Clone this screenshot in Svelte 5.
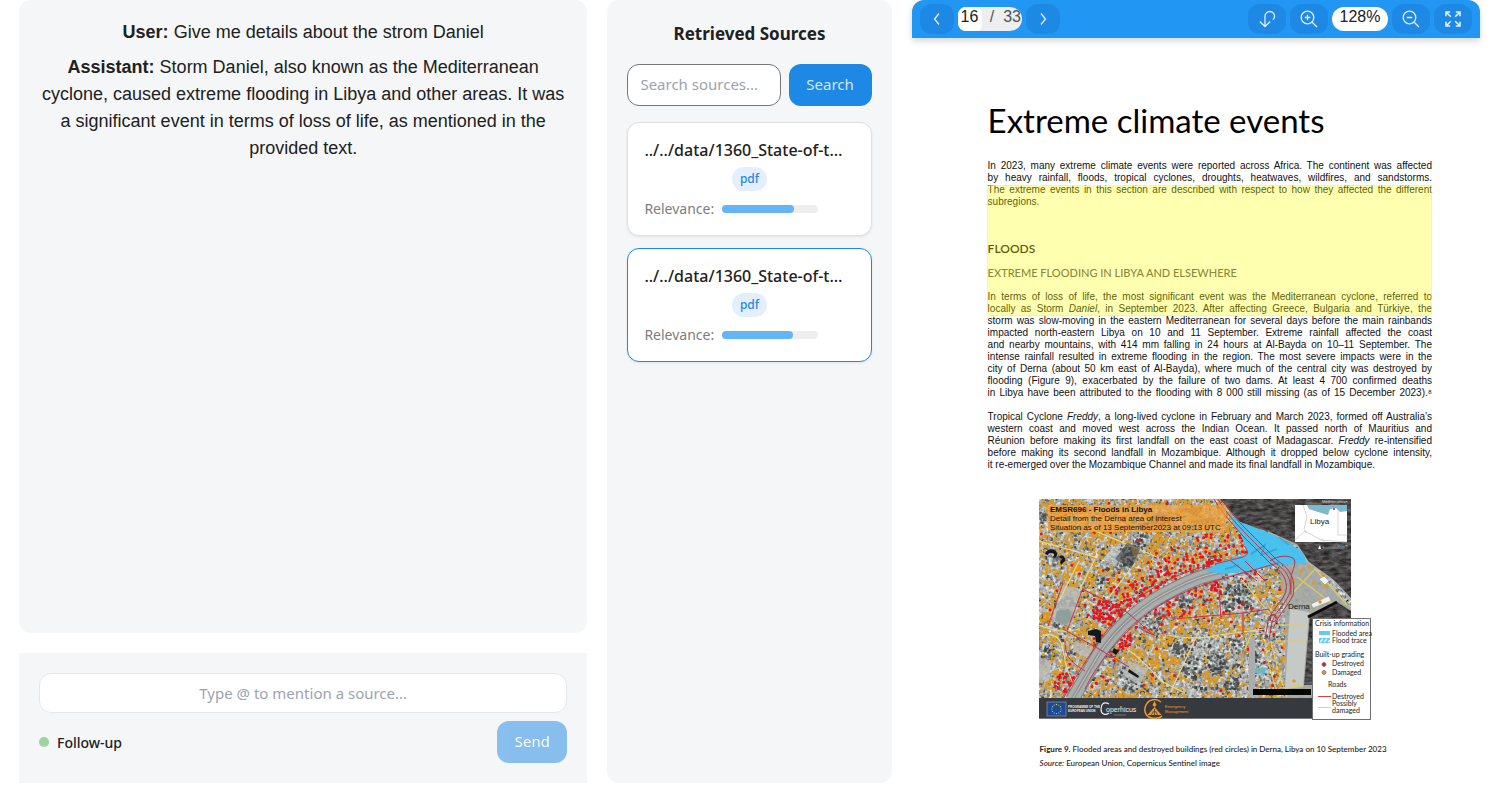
<script>
  const messages = [
    { role: 'User', text: 'Give me details about the strom Daniel' },
    {
      role: 'Assistant',
      text: 'Storm Daniel, also known as the Mediterranean cyclone, caused extreme flooding in Libya and other areas. It was a significant event in terms of loss of life, as mentioned in the provided text.'
    }
  ];

  const sources = [
    { id: 1, name: '../../data/1360_State-of-t…', type: 'pdf', score: 75 },
    { id: 2, name: '../../data/1360_State-of-t…', type: 'pdf', score: 74 }
  ];
  let selected = $state(2);
  let query = $state('');
  let draft = $state('');
  let page = $state('16');

  // Each entry is one typeset line; pieces in {} are italic.
  const intro = [
    'In 2023, many extreme climate events were reported across Africa. The continent was affected',
    'by heavy rainfall, floods, tropical cyclones, droughts, heatwaves, wildfires, and sandstorms.',
    'The extreme events in this section are described with respect to how they affected the different',
    'subregions.'
  ];
  const libya = [
    'In terms of loss of life, the most significant event was the Mediterranean cyclone, referred to',
    'locally as Storm {Daniel}, in September 2023. After affecting Greece, Bulgaria and Türkiye, the',
    'storm was slow-moving in the eastern Mediterranean for several days before the main rainbands',
    'impacted north-eastern Libya on 10 and 11 September. Extreme rainfall affected the coast',
    'and nearby mountains, with 414 mm falling in 24 hours at Al-Bayda on 10–11 September. The',
    'intense rainfall resulted in extreme flooding in the region. The most severe impacts were in the',
    'city of Derna (about 50 km east of Al-Bayda), where much of the central city was destroyed by',
    'flooding (Figure 9), exacerbated by the failure of two dams. At least 4 700 confirmed deaths',
    'in Libya have been attributed to the flooding with 8 000 still missing (as of 15 December 2023).⁸'
  ];
  const freddy = [
    'Tropical Cyclone {Freddy}, a long-lived cyclone in February and March 2023, formed off Australia’s',
    'western coast and moved west across the Indian Ocean. It passed north of Mauritius and',
    'Réunion before making its first landfall on the east coast of Madagascar. {Freddy} re-intensified',
    'before making its second landfall in Mozambique. Although it dropped below cyclone intensity,',
    'it re-emerged over the Mozambique Channel and made its final landfall in Mozambique.'
  ];
  const pieces = (line) => line.split(/[{}]/);

  // Seeded generator, so that the map is the same on every load.
  let seed = 9137;
  const rnd = () => {
    seed = (seed * 1664525 + 1013904223) % 4294967296;
    return seed / 4294967296;
  };
  const square = (x, y, s) => `M${x.toFixed(1)} ${y.toFixed(1)}h${s}v${s}h-${s}z`;
  const dot = (x, y, r) =>
    `M${(x - r).toFixed(1)} ${y.toFixed(1)}a${r} ${r} 0 1 0 ${2 * r} 0a${r} ${r} 0 1 0 ${-2 * r} 0z`;

  const road = [[33, 201], [60, 155], [76, 134], [96, 114], [135, 90], [171, 75], [205, 70]];
  const wadi = 'M33 201 60 155C78 128 105 104 135 90 150 82 165 76 182 73';
  function roadDistance(x, y) {
    let best = 999;
    for (let i = 0; i < road.length - 1; i++) {
      const [ax, ay] = road[i];
      const [bx, by] = road[i + 1];
      const dx = bx - ax;
      const dy = by - ay;
      const t = Math.max(0, Math.min(1, ((x - ax) * dx + (y - ay) * dy) / (dx * dx + dy * dy)));
      best = Math.min(best, Math.hypot(x - ax - t * dx, y - ay - t * dy));
    }
    return best;
  }
  const parks = [[4, 20, 7], [82, 58, 13], [100, 40, 8], [12, 57, 8], [26, 108, 12], [20, 122, 8], [198, 94, 14], [188, 106, 8], [146, 102, 8], [140, 150, 9], [152, 168, 12], [92, 182, 12], [62, 83, 7], [112, 122, 8], [196, 146, 10], [178, 164, 12], [192, 184, 9], [6, 155, 8], [212, 158, 6], [160, 190, 6]];
  const inPark = (x, y) => parks.some(([px, py, r]) => Math.hypot(x - px, y - py) < r);

  // Streets run on a grid turned by about thirty degrees.
  const onStreet = (x, y) => {
    const u = x * 0.86 + y * 0.5 + 400;
    const v = -x * 0.5 + y * 0.86 + 400;
    return u % 19 < 3 || v % 14 < 2.4;
  };

  const shades = ['#1c2021', '#363b3b', '#5d6260', '#8a8f8d', '#b0b5b2', '#d8dbd7'];
  const blocks = shades.map(() => '');
  for (let i = 0; i < 6200; i++) {
    const x = rnd() * 250;
    const y = rnd() * 199;
    const k = inPark(x, y)
      ? Math.floor(rnd() * 2.9)
      : onStreet(x, y)
        ? 3 + Math.floor(rnd() * 2.4)
        : Math.floor(rnd() * 6);
    blocks[k] += square(x, y, rnd() > 0.7 ? 3 : 2);
  }
  let damaged = '';
  let destroyed = '';
  for (let gx = 1; gx < 246; gx += 2.8) {
    for (let gy = 1; gy < 198; gy += 2.8) {
      const x = gx + rnd() * 2;
      const y = gy + rnd() * 2;
      if (inPark(x, y) && rnd() < 0.92) continue;
      const d = roadDistance(x, y);
      if (d < 8) continue;
      if (onStreet(x, y) && rnd() < 0.8) continue;
      const wave = Math.sin(x / 11 + y / 17) + Math.cos(y / 9 - x / 23);
      const sparse = x > 205 ? 0.3 : x > 150 && y > 130 ? 0.38 : 0.66;
      const core = Math.hypot(x - 68, y - 115) < 15 || Math.hypot(x - 28, y - 184) < 12 || Math.hypot(x - 86, y - 142) < 8;
      const strip = y < 118 && x < 214 && y > 34 ? 0.62 - d / 75 : 0.34 - d / 60;
      const redChance = core ? 0.85 : Math.max(strip, 0.02);
      if (rnd() < redChance && y < 194) destroyed += dot(x, y, 1.5);
      else if (rnd() < sparse + wave * 0.16) damaged += dot(x, y, 1.5);
    }
  }

  const stars = Array.from({ length: 12 }, (_, i) => {
    const a = (i * Math.PI) / 6;
    return { x: 17.5 + 4.6 * Math.cos(a), y: 210 + 4.6 * Math.sin(a) };
  });
</script>

{#snippet typeset(lines)}
  <p class="body-text">
    {#each lines as line, i}
      <span class="line" class:last={i === lines.length - 1 && line.length < 90}>{#each pieces(line) as piece, j}{#if j % 2}<em>{piece}</em>{:else}{piece}{/if}{/each}</span>
    {/each}
  </p>
{/snippet}

<div class="app">
  <main class="chat">
    <section class="panel messages" aria-label="Conversation">
      {#each messages as m}
        <p><strong>{m.role}:</strong> {m.text}</p>
      {/each}
    </section>
    <form class="composer" onsubmit={(e) => e.preventDefault()}>
      <input class="prompt" type="text" aria-label="Message" placeholder="Type @ to mention a source..." bind:value={draft} />
      <div class="composer-row">
        <span class="status"><i></i>Follow-up</span>
        <button class="primary send" type="submit" disabled={!draft}>Send</button>
      </div>
    </form>
  </main>

  <aside class="panel sources">
    <h2>Retrieved Sources</h2>
    <form class="search" onsubmit={(e) => e.preventDefault()}>
      <input type="text" aria-label="Search sources" placeholder="Search sources..." bind:value={query} />
      <button class="primary" type="submit">Search</button>
    </form>
    <div class="cards">
      {#each sources as s (s.id)}
        <button class="card" class:selected={selected === s.id} type="button" onclick={() => (selected = s.id)}>
          <span class="name">{s.name}</span>
          <span class="tag">{s.type}</span>
          <span class="relevance">
            Relevance:
            <span class="track"><span class="fill" style="width: {s.score}%"></span></span>
          </span>
        </button>
      {/each}
    </div>
  </aside>

  <section class="viewer" aria-label="Document">
    <div class="toolbar">
      <button type="button" class="nav" aria-label="Previous page">
        <svg width="16" height="16" viewBox="0 0 16 16"><path d="M10 2.500 5.500 8l4.500 5.500" /></svg>
      </button>
      <div class="pager">
        <input type="text" aria-label="Page number" bind:value={page} />
        <span>/</span><span class="total">33</span>
      </div>
      <button type="button" class="nav" aria-label="Next page">
        <svg width="16" height="16" viewBox="0 0 16 16"><path d="M6 2.500 10.500 8 6 13.500" /></svg>
      </button>
      <span class="spacer"></span>
      <button type="button" aria-label="Rotate page">
        <svg width="18" height="18" viewBox="0 0 18 18"><path d="M7 16.500V6.300a4.800 4.800 0 0 1 9.600 0c0 1.500-.6 2.600-1.700 3.500M1.800 11.500l5.200 5 5.200-5" /></svg>
      </button>
      <button type="button" aria-label="Zoom in">
        <svg width="18" height="18" viewBox="0 0 18 18"><circle cx="7.500" cy="7.500" r="6.300" /><path d="M12.200 12.200 17 17M4.700 7.500h5.600M7.500 4.700v5.600" /></svg>
      </button>
      <span class="zoom">128%</span>
      <button type="button" aria-label="Zoom out">
        <svg width="18" height="18" viewBox="0 0 18 18"><circle cx="7.500" cy="7.500" r="6.300" /><path d="M12.200 12.200 17 17M4.700 7.500h5.600" /></svg>
      </button>
      <button type="button" class="full" aria-label="Full screen">
        <svg width="18" height="18" viewBox="0 0 18 18"><path d="M2 6.200V2h4.200M2 2l4.800 4.800M11.800 2H16v4.200M16 2l-4.800 4.800M2 11.800V16h4.200M2 16l4.800-4.800M16 11.800V16h-4.200M16 16l-4.800-4.800" /></svg>
      </button>
    </div>

    <article class="page">
      <h1>Extreme climate events</h1>
      {@render typeset(intro)}
      <h3>FLOODS</h3>
      <h4>EXTREME FLOODING IN LIBYA AND ELSEWHERE</h4>
      {@render typeset(libya)}
      {@render typeset(freddy)}
      <div class="highlight"></div>

      <figure>
        <svg class="map" width="332" height="221" viewBox="0 0 332 221" role="img" aria-label="Map of flooded areas in Derna">
          <defs>
            <clipPath id="frame"><rect width="312" height="220" /></clipPath>
            <filter id="grain" x="0" y="0" width="100%" height="100%">
              <feTurbulence type="fractalNoise" baseFrequency="0.3" numOctaves="3" seed="4" />
              <feColorMatrix values="1.300 0 0 0 -.2  1.300 0 0 0 -.18  1.300 0 0 0 -.19  0 0 0 0 1" />
            </filter>
            <filter id="swell" x="0" y="0" width="100%" height="100%" color-interpolation-filters="sRGB">
              <feTurbulence type="fractalNoise" baseFrequency="0.12 0.3" numOctaves="3" seed="8" result="n" />
              <feColorMatrix values=".45 0 0 0 .06  .45 0 0 0 .05  .45 0 0 0 .05  0 0 0 0 1" />
              <feComposite in2="SourceGraphic" operator="in" />
            </filter>
          </defs>
          <g clip-path="url(#frame)">
            <rect width="312" height="199" fill="#888" filter="url(#grain)" />
            {#each shades as fill, i}<path d={blocks[i]} {fill} opacity=".7" />{/each}
            <path d={damaged} fill="#de981d" />
            <path d={destroyed} fill="#ee1016" />

            <g fill="#b9bebc" opacity=".8">
              <path d="M24 86 42 90 32 128 12 122z" />
              <path d="M36 142l18 6-4 12-16-8z" />
              <path d="M90 162l20 8-10 16-16-10z" />
              <path d="M0 158l12 4-2 20-10 2z" />
            </g>
            <path d="M18 112l12-2 4 10-8 6-10-4z" fill="#8fa09b" />
            <g fill="none" stroke="#e4da8a" stroke-width="1.200">
              <path d="M0 42 56 58M52 30 118 58M96 64 70 98M56 60 40 92M0 126c14 6 28 8 40 4M4 136c12-2 18 4 20 14 2 16 6 30 16 46M160 132l-28 60M88 150c12 8 22 18 34 32l24 12M128 136c20 4 36 4 52 0l46-6M20 28l34-8 30 6M40 62l-20 40" />
            </g>

            <path d="M240 68 258 64 270 64 312 108V199H246V110z" fill="#a5a8a2" opacity=".9" />
            <path d="M251 110 270 113 264 188 246 190z" fill="#c6cac7" />
            <path d="M210 138h6v60h-6z" fill="#a9adac" />
            <path d="M202 80l30 36M252 96l24-26 32 36M258 78l40 30M232 126h34M234 142h32M232 142c4 20 8 34 16 56M226 142c2 22 8 40 14 56M240 189l24-2M206 150l6-14 14-2" fill="none" stroke="#ddcb62" stroke-width="1.200" />
            <g fill="#f1f1ec" stroke="#8c8d88" stroke-width=".5"><path d="M272 105l18-8 2 5-18 7z" /><path d="M280 80l5-3 5 5-4 4z" /></g>
            <path d="M254 83h.1M262 72h.1M270 68h.1M275 84h.1M286 87h.1M247 132h.1M245 147h.1M243 160h.1M255 182h.1M281 103h.1M284 76h.1M240 94h.1M234 92h.1M243 84h.1M240 172h.1" stroke="#e39a16" stroke-width="3.400" stroke-linecap="round" />

            <path d="M181 0 201 23 229 33 258 46 269 63 294 81 312 101V0z" fill="#444" filter="url(#swell)" />
            <path d="M271 116 298 103 312 112V186H265z" fill="#444" filter="url(#swell)" />
            <path d="M269 118 298 103" fill="none" stroke="#0c0c0c" stroke-width="3" />
            <path d="M229 33 258 46 269 63 294 81 312 100" fill="none" stroke="#aeb2ae" stroke-width="1.500" />

            <path d={wadi} fill="none" stroke="#7c807f" stroke-width="14" />
            <path d={wadi} fill="none" stroke="#a9adab" stroke-width="12" />
            <path d={wadi} fill="none" stroke="#8f9391" stroke-width="4" />
            <path d={wadi} fill="none" stroke="#c4c7c5" stroke-width="1" />
            <path d="M186 11 201 23 228 33 251 44 264 54 268 64 234 67 204 73 184 75 166 72 181 63 209 54 201 34z" fill="#48c1ee" />
            <path d="M212 55l14-9-4 10 16-6M240 38l10 8M186 70l14-4" fill="none" stroke="#2f8fbd" stroke-width="1.500" opacity=".6" />
            <g fill="none" stroke="#d0314a" stroke-width="1">
              <path d="M24 200C40 172 60 140 80 116 106 90 140 72 180 64l24-6c8-3 4-9-3-15" />
              <path d="M46 190C60 160 84 136 100 122 122 102 150 88 211 72l28-8" />
              <path d="M24 84 9 127M44 89 28 132M44 90c14 8 28 14 40 20l32 27M24 130 60 150 90 168M26 142c0 18 8 22 20 30M130 112l-16 24-12-6M130 112l4 8 70-6 26-4M180 90l2 30M204 114v20" />
            </g>
            <g fill="none" stroke="#b83449" stroke-width="1">
              <path d="M175 0c8 14 18 24 28 36 12 12 20 20 28 28 12 8 18 16 16 28-4 12-14 18-18 30l-3 18" />
              <path d="M179 0c8 14 18 24 28 35 12 12 20 20 28 28 12 8 18 16 16 30-4 12-14 18-18 30l-3 18" />
              <path d="M183 0c8 14 18 24 28 34 12 12 20 20 28 28 12 8 18 18 15 34-4 10-14 18-20 34" />
              <path d="M231 62c8-6 20-6 24-2 3 6-3 12-3 20v16" />
              <path d="M192 62l26 20M206 62l20 20" />
              <circle cx="234" cy="119" r="3.500" />
            </g>

            <g fill="#151819">
              <path d="M6 55a6 5 0 1 1 10 4l-4-1a3 2 0 1 0-3-2zM20 58c2-3 7-1 6 4l-4 4-1-3 2-3z" />
              <path d="M49 132l8-2 5 2v12l-5-1-1-6-7-1z" />
              <path d="M75 149l5 3-3 4-4-3zM90 170l10 7-1 2-10-6z" />
            </g>
            <path d="M64 60l10-12 10 6-8 14z" fill="#cfd4d4" opacity=".7" />
            <path d="M76 60l12-16 14 4-10 22z" fill="#3f4346" opacity=".6" />
            <path d="M216 169h10v5h-10z" fill="#55bfe0" />
            <circle cx="221" cy="171.500" r="1.600" fill="#e39a16" />
            <path d="M214 190h58v6h-58z" fill="#050505" />

            <path d="M9 6H187V33H9z" fill="#f2a23f" opacity=".72" />
            <path d="M120 12l14 8-14 10-14-6zM140 10l18 8 6-10zM150 22l20 8 8-12z" fill="#c9802f" opacity=".35" />
            <g fill="#1a1206" class="map-title">
              <text x="11" y="13" font-weight="700">EMSR696 - Floods in Libya</text>
              <text x="11" y="22">Detail from the Derna area of interest</text>
              <text x="11" y="31">Situation as of 13 September2023 at 09:13 UTC</text>
            </g>

            <rect x="256" y="6" width="52" height="37" fill="#fff" />
            <path d="M268 6h40v6l-7 1-4-4-6 1-2 6-10-3-9-3z" fill="#7cb9cb" />
            <path d="M264 6l4 12-3 12 2 4M256 41l10-9 16 9 26 2M299 12v24h9M282 40l4 3" fill="none" stroke="#b9b9b9" stroke-width=".6" />
            <circle cx="295" cy="10" r="1" fill="#c22" />
            <text x="271" y="25" class="place">Libya</text>
            <text x="283" y="4" class="micro" fill="#ddd">Mediterranean</text>
            <path d="M284 49h21M284 47v2M305 47v2" stroke="#8fa9bd" stroke-width=".6" /><path d="M279 50l2-4 1 4z" fill="#fff" />
            <text x="298" y="48" class="micro" fill="#9cc4dd">100 m</text>
            <text x="249" y="110" class="place">Derna</text>

            <rect y="199" width="312" height="21" fill="#363a3e" />
            <path d="M0 219.500H312" stroke="#77797b" />
            <rect x="8" y="203" width="19" height="14" fill="#1c4a9b" stroke="#8b97ab" stroke-width=".7" />
            {#each stars as s}<circle cx={s.x} cy={s.y} r=".6" fill="#d9d35a" />{/each}
            <g class="fine" fill="#f2f2f2"><text x="29" y="209">PROGRAMME OF THE</text><text x="29" y="213">EUROPEAN UNION</text></g>
            <path d="M70 205c-5-3-8 0-8 5s4 7 8 4" fill="none" stroke="#f0f0f0" stroke-width="1.200" />
            <text x="67" y="213" class="brand">opernicus</text>
            <circle cx="82" cy="208" r=".9" fill="#f2a02c" />
            <path d="M75 216h12" stroke="#9a9c9e" stroke-width=".6" />
            <path d="M122 203c-5-4-12-3-15 3s0 12 6 13 8 0 10-2" fill="none" stroke="#f09a26" stroke-width="1.500" />
            <path d="M115.500 202l2 4-2 2-2-2zM115.500 208l7 8h-14z" fill="#f09a26" />
            <path d="M115.500 210v6M112.500 216l2-4M118.500 216l-2-4" stroke="#363a3e" stroke-width=".8" />
            <g class="micro" fill="#f09a26"><text x="126" y="209">Emergency</text><text x="126" y="214">Management</text></g>
          </g>

          <rect x="273.500" y="119.500" width="58" height="101" fill="#fff" stroke="#6f6f6f" />
          <g class="legend">
            <text x="276" y="127">Crisis information</text>
            <rect x="280" y="132" width="11" height="4" fill="#62ccf6" /><text x="293" y="137">Flooded area</text>
            <rect x="280" y="139" width="11" height="5" fill="#62ccf6" /><path d="M281 143l3-3M285 143l3-3M289 143l2-2" stroke="#fff" stroke-width="1.200" /><text x="293" y="144">Flood trace</text>
            <text x="276" y="158">Built-up grading</text>
            <circle cx="285" cy="165.500" r="2" fill="#d71c22" stroke="#777" stroke-width=".8" /><text x="293" y="167">Destroyed</text>
            <circle cx="285" cy="173.500" r="2" fill="#e0952a" stroke="#777" stroke-width=".8" /><text x="293" y="176">Damaged</text>
            <text x="289" y="188">Roads</text>
            <path d="M279 197.500h13" stroke="#e5383e" /><text x="293" y="200">Destroyed</text>
            <path d="M279 208.500h13" stroke="#e9d36a" /><text x="293" y="207">Possibly</text><text x="293" y="214">damaged</text>
          </g>
        </svg>
        <figcaption>
          <span><b>Figure 9.</b> Flooded areas and destroyed buildings (red circles) in Derna, Libya on 10 September 2023</span>
          <span><em>Source:</em> European Union, Copernicus Sentinel image</span>
        </figcaption>
      </figure>
    </article>
  </section>
</div>

<style>
  :global(body) {
    margin: 0;
    background: #fff;
    color: #212121;
    font-family: 'Noto Sans', sans-serif;
  }
  * {
    box-sizing: border-box;
  }
  button,
  input {
    font: inherit;
    margin: 0;
  }
  h1, h2, h3, h4, p, figure {
    margin: 0;
  }

  .app {
    display: grid;
    grid-template-columns: 2fr 1fr 2fr;
    gap: 20px;
    height: 100vh;
    min-height: 793px;
    padding: 0 18px 10px 19px;
  }
  .app > * {
    min-width: 0;
  }
  .panel {
    background: #f4f6f8;
    border-radius: 12px;
  }

  .chat {
    display: flex;
    flex-direction: column;
    gap: 20px;
  }
  .messages {
    flex: 1;
    display: flex;
    flex-direction: column;
    gap: 8px;
    padding: 19px 20px;
    text-align: center;
    font: 18px/27px 'Liberation Sans', sans-serif;
  }
  .composer {
    display: flex;
    flex-direction: column;
    gap: 8px;
    padding: 20px;
    background: #f4f6f8;
  }
  .prompt {
    width: 100%;
    height: 40px;
    border: 1px solid #e5e7eb;
    border-radius: 12px;
    background: #fff;
    text-align: center;
    font-size: 15px;
  }
  input::placeholder {
    color: #9ca3af;
    opacity: 1;
  }
  .composer-row {
    display: flex;
    justify-content: space-between;
    align-items: center;
  }
  .status {
    display: flex;
    align-items: center;
    gap: 8px;
    font-size: 14px;
    font-weight: 500;
  }
  .status i {
    width: 10px;
    height: 10px;
    border-radius: 50%;
    background: #9fd3a2;
  }
  .primary {
    height: 42px;
    padding: 0 16px 2px;
    border: 0;
    border-radius: 12px;
    background: #1e88e5;
    color: #d6e6f7;
    font-size: 15px;
  }
  .send {
    min-width: 70px;
    opacity: 0.5;
    color: #fff;
  }

  .sources {
    padding: 20px;
  }
  h2 {
    font-size: 17px;
    font-weight: 700;
    line-height: 28px;
    text-align: center;
  }
  .search {
    display: flex;
    gap: 8px;
    margin: 16px 0;
  }
  .search input {
    flex: 1;
    min-width: 0;
    height: 42px;
    padding: 0 12px 2px;
    border: 1px solid #767676;
    border-radius: 12px;
    background: #fff;
    font-size: 15px;
  }
  .search .primary {
    min-width: 83px;
  }
  .cards {
    display: flex;
    flex-direction: column;
    gap: 12px;
  }
  .card {
    display: flex;
    flex-direction: column;
    align-items: center;
    height: 114px;
    padding: 16px;
    border: 1px solid #e0e0e0;
    border-radius: 12px;
    background: #fff;
    color: #212121;
    box-shadow: 0 1px 3px rgba(0, 0, 0, 0.08);
  }
  .card.selected {
    border-color: #1e88e5;
  }
  .name {
    align-self: flex-start;
    font-size: 16px;
    font-weight: 500;
    line-height: 22px;
    white-space: nowrap;
  }
  .tag {
    height: 24px;
    margin: 6px 0 8px;
    padding: 0 8px;
    border-radius: 12px;
    background: #e3effc;
    color: #1e88e5;
    font-size: 12px;
    font-weight: 500;
    line-height: 23px;
  }
  .relevance {
    display: flex;
    align-items: center;
    align-self: stretch;
    gap: 8px;
    color: #7d7d7d;
    font-size: 14px;
    line-height: 20px;
  }
  .track {
    width: 96px;
    height: 8px;
    border-radius: 4px;
    background: #eee;
  }
  .fill {
    display: block;
    height: 100%;
    border-radius: 4px;
    background: #64b5f6;
  }

  .toolbar {
    display: flex;
    align-items: center;
    gap: 4px;
    height: 38px;
    padding: 0 8px;
    border-radius: 12px 12px 0 0;
    background: #2196f3;
    box-shadow: 0 3px 6px rgba(0, 0, 0, 0.16);
    font: 16px/20px 'Liberation Sans', sans-serif;
  }
  .toolbar button {
    display: grid;
    place-items: center;
    width: 38px;
    height: 30px;
    padding: 0;
    border: 0;
    border-radius: 12px;
    background: #1e88e5;
  }
  .toolbar .nav {
    width: 34px;
  }
  .toolbar svg {
    fill: none;
    stroke: #e3f0fc;
    stroke-width: 1.3;
  }
  .toolbar .full svg {
    stroke-width: 1.6;
  }
  .pager {
    display: flex;
    width: 64px;
    height: 24px;
    overflow: hidden;
    border-radius: 8px 12px 12px 8px;
    background: #eee;
    color: #4b5563;
  }
  .pager input {
    width: 24px;
    height: 24px;
    padding: 0 3px 4px;
    border: 0;
    border-radius: 6px;
    background: #fff;
    color: #212121;
  }
  .pager span {
    width: 21px;
    text-align: center;
  }
  .pager .total {
    width: 19px;
  }
  .spacer {
    flex: 1;
  }
  .zoom {
    width: 56px;
    height: 24px;
    border-radius: 12px;
    background: #fff;
    text-align: center;
  }

  .page {
    position: relative;
    padding: 59px 48px 0 76px;
    color: #111;
  }
  h1 {
    color: #000;
    font: 400 33px/46px Lato, sans-serif;
    white-space: nowrap;
  }
  .body-text {
    margin: 17px 0 12px;
    font: 10px/12px 'Liberation Sans', sans-serif;
  }
  .line {
    display: block;
    text-align-last: justify;
    white-space: nowrap;
  }
  .line.last {
    text-align-last: left;
  }
  h3,
  h4 {
    font: 500 12px/16px Lato, sans-serif;
  }
  h3 {
    margin-top: 33px;
    font-weight: 600;
  }
  h4 {
    margin: 8px 0 10px;
    color: #555;
    font-size: 11px;
  }
  h4 + .body-text,
  .body-text + .body-text {
    margin-top: 0;
  }
  .highlight {
    position: absolute;
    top: 147px;
    left: 75px;
    right: 48px;
    height: 131px;
    border: 1px solid rgba(255, 255, 0, 0.5);
    border-radius: 3px;
    background: rgba(255, 255, 0, 0.31);
  }
  figure {
    padding: 16px 0 0 51px;
  }
  .map {
    display: block;
    overflow: visible;
  }
  .map text {
    font-family: 'Liberation Sans', sans-serif;
  }
  .map-title text {
    font-size: 8px;
  }
  .map .place {
    fill: #14181a;
    font-size: 8px;
  }
  .map .micro,
  .micro text {
    font-size: 4px;
  }
  .fine text {
    font-size: 3px;
    font-weight: 700;
  }
  .map .brand {
    fill: #f0f0f0;
    font-size: 7px;
  }
  .legend text {
    fill: #222;
    font-family: Lato, sans-serif;
    font-size: 7px;
  }
  figcaption {
    display: flex;
    flex-direction: column;
    padding: 22px 0 0 1px;
    color: #222;
    font: 500 8px/14px Lato, sans-serif;
    white-space: nowrap;
  }
</style>
